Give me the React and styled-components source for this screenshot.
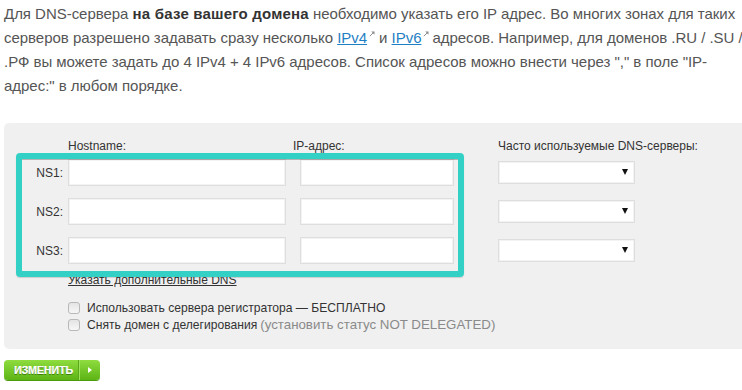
import React from "react";
import styled, { createGlobalStyle } from "styled-components";

const GlobalStyle = createGlobalStyle`
  html, body { margin: 0; padding: 0; background: #fff; }
  body { font-family: "Liberation Sans", Arial, sans-serif; overflow: hidden; }
  * { box-sizing: border-box; }
`;

const Page = styled.div`
  width: 742px;
  height: 390px;
  padding-left: 4px;
  overflow: hidden;
`;

const Intro = styled.p`
  margin: 0;
  padding-top: 2px;
  font-size: 15px;
  line-height: 24px;
  color: #555;
  white-space: nowrap;
  letter-spacing: -0.03px;
`;

const Strong = styled.b`
  color: #333;
  font-weight: bold;
  letter-spacing: 0.2px;
`;

const ExtLink = styled.a`
  color: #1f7fc4;
  text-decoration: underline;
`;

const ExtIcon = styled.svg`
  display: inline-block;
  width: 6px;
  height: 6px;
  margin: 0 ${(p) => p.$mr}px 0 2px;
  vertical-align: 6px;
`;

const Panel = styled.div`
  position: relative;
  margin-top: 25px;
  margin-right: -10px;
  padding: 16px 0 16px 0;
  background: #f0f0f0;
  border-radius: 5px 0 0 5px;
`;

const Grid = styled.div`
  display: grid;
  grid-template-columns: 64px 232px 198px 136px;
  align-items: center;
  row-gap: ${(p) => p.$gap || 0}px;
  margin-bottom: ${(p) => p.$mb || 0}px;
`;

const HeadLabel = styled.div`
  font-size: 12px;
  line-height: 14px;
  color: #333;
  white-space: nowrap;
  margin-left: ${(p) => p.$shift || 0}px;
`;

const RowLabel = styled.div`
  font-size: 12px;
  color: #333;
  text-align: right;
  padding-right: 5px;
`;

const TextInput = styled.input`
  display: block;
  width: ${(p) => p.$w}px;
  height: 27px;
  border: 1px solid #dedede;
  box-shadow: inset 0 0 0 1px #f3f3f3;
  background: #fff;
  padding: 2px 4px;
  font: 12px "Liberation Sans", Arial, sans-serif;
  outline: none;
`;

const SelectWrap = styled.div`
  position: relative;
  width: 137px;
  height: 23px;
`;

const Select = styled.select`
  appearance: none;
  -webkit-appearance: none;
  display: block;
  width: 100%;
  height: 100%;
  border: 1px solid #dedede;
  box-shadow: inset 0 0 0 1px #f3f3f3;
  background: #fff;
  border-radius: 0;
  outline: none;
  font: 12px "Liberation Sans", Arial, sans-serif;
`;

const SelectArrow = styled.span`
  position: absolute;
  right: 7px;
  top: 8px;
  width: 0;
  height: 0;
  border-left: 3px solid transparent;
  border-right: 3px solid transparent;
  border-top: 6px solid #111;
  pointer-events: none;
`;

const Highlight = styled.div`
  position: absolute;
  left: 12px;
  top: 30px;
  width: 448px;
  height: 124px;
  border: 6px solid #33d0c6;
  border-radius: 4px;
  box-shadow: inset 0 1px 0 rgba(0, 0, 0, 0.25), 0 1px 1px rgba(0, 0, 0, 0.15);
  pointer-events: none;
`;

const MoreLink = styled.a`
  display: block;
  width: max-content;
  margin: 9px 0 0 64px;
  font-size: 12px;
  line-height: 14px;
  color: #333;
  text-decoration: underline;
`;

const Options = styled.div`
  margin: 12px 0 0 64px;
  display: flex;
  flex-direction: column;
`;

const OptionRow = styled.label`
  display: flex;
  align-items: center;
  height: 17px;
  font-size: 12.1px;
  color: #333;
  white-space: nowrap;
`;

const Box = styled.span`
  width: 12px;
  height: 12px;
  margin-right: 7px;
  border: 1px solid #b8b8b8;
  border-radius: 3px;
  background: linear-gradient(#e4e4e4, #f7f7f7);
  flex: none;
`;

const Muted = styled.span`
  color: #8a8a8a;
  font-size: 13.3px;
  margin-left: 3px;
`;

const Button = styled.button`
  display: flex;
  align-items: stretch;
  margin-top: 11px;
  height: 20px;
  padding: 0;
  border: none;
  border-radius: 4px;
  background: linear-gradient(#8fdc3f, #5db415);
  box-shadow: 0 1px 0 #4c9a0d;
  cursor: pointer;
`;

const ButtonText = styled.span`
  display: flex;
  align-items: center;
  padding: 0 5px 0 10px;
  font: bold 10.5px "Liberation Sans", Arial, sans-serif;
  color: #fff;
  text-shadow: 0 1px 0 #3f7d0d, 0.4px 0 0 #fff;
  border-right: 1px solid #5aa819;
`;

const ButtonArrow = styled.span`
  display: flex;
  align-items: center;
  padding: 0 8px 0 8px;
  border-left: 1px solid #9fe55c;
  &::after {
    content: "";
    width: 0;
    height: 0;
    border-top: 3.5px solid transparent;
    border-bottom: 3.5px solid transparent;
    border-left: 4px solid #fff;
  }
`;

const Ext = ({ mr }) => (
  <ExtIcon viewBox="0 0 7 7" $mr={mr}>
    <path d="M1 6 L5.5 1.5" stroke="#888" strokeWidth="1.1" fill="none" />
    <path d="M2.6 0.6 L6.4 0.6 L6.4 4.4 Z" fill="#888" />
  </ExtIcon>
);

const rows = ["NS1:", "NS2:", "NS3:"];

export default function App() {
  return (
    <Page>
      <GlobalStyle />
      <Intro>
        Для DNS-сервера <Strong>на базе вашего домена</Strong> необходимо указать его IP адрес. Во многих зонах для таких
        <br />
        серверов разрешено задавать сразу несколько <ExtLink href="#">IPv4</ExtLink>
        <Ext mr={4} />и <ExtLink href="#">IPv6</ExtLink>
        <Ext mr={3} />адресов. Например, для доменов .RU / .SU /
        <br />
        .РФ вы можете задать до 4 IPv4 + 4 IPv6 адресов. Список адресов можно внести через "," в поле "IP-
        <br />
        адрес:" в любом порядке.
      </Intro>
      <Panel>
        <Grid $mb={6}>
          <span />
          <HeadLabel>Hostname:</HeadLabel>
          <HeadLabel $shift={-7}>IP-адрес:</HeadLabel>
          <HeadLabel>Часто используемые DNS-серверы:</HeadLabel>
        </Grid>
        <Grid $gap={12}>
          {rows.map((r) => (
            <React.Fragment key={r}>
              <RowLabel>{r}</RowLabel>
              <TextInput $w={218} />
              <TextInput $w={154} />
              <SelectWrap>
                <Select>
                  <option></option>
                </Select>
                <SelectArrow />
              </SelectWrap>
            </React.Fragment>
          ))}
        </Grid>
        <MoreLink href="#">Указать дополнительные DNS</MoreLink>
        <Options>
          <OptionRow>
            <Box />
            Использовать сервера регистратора — БЕСПЛАТНО
          </OptionRow>
          <OptionRow>
            <Box />
            Снять домен с делегирования<Muted>(установить статус NOT DELEGATED)</Muted>
          </OptionRow>
        </Options>
        <Highlight />
      </Panel>
      <Button>
        <ButtonText>ИЗМЕНИТЬ</ButtonText>
        <ButtonArrow />
      </Button>
    </Page>
  );
}
